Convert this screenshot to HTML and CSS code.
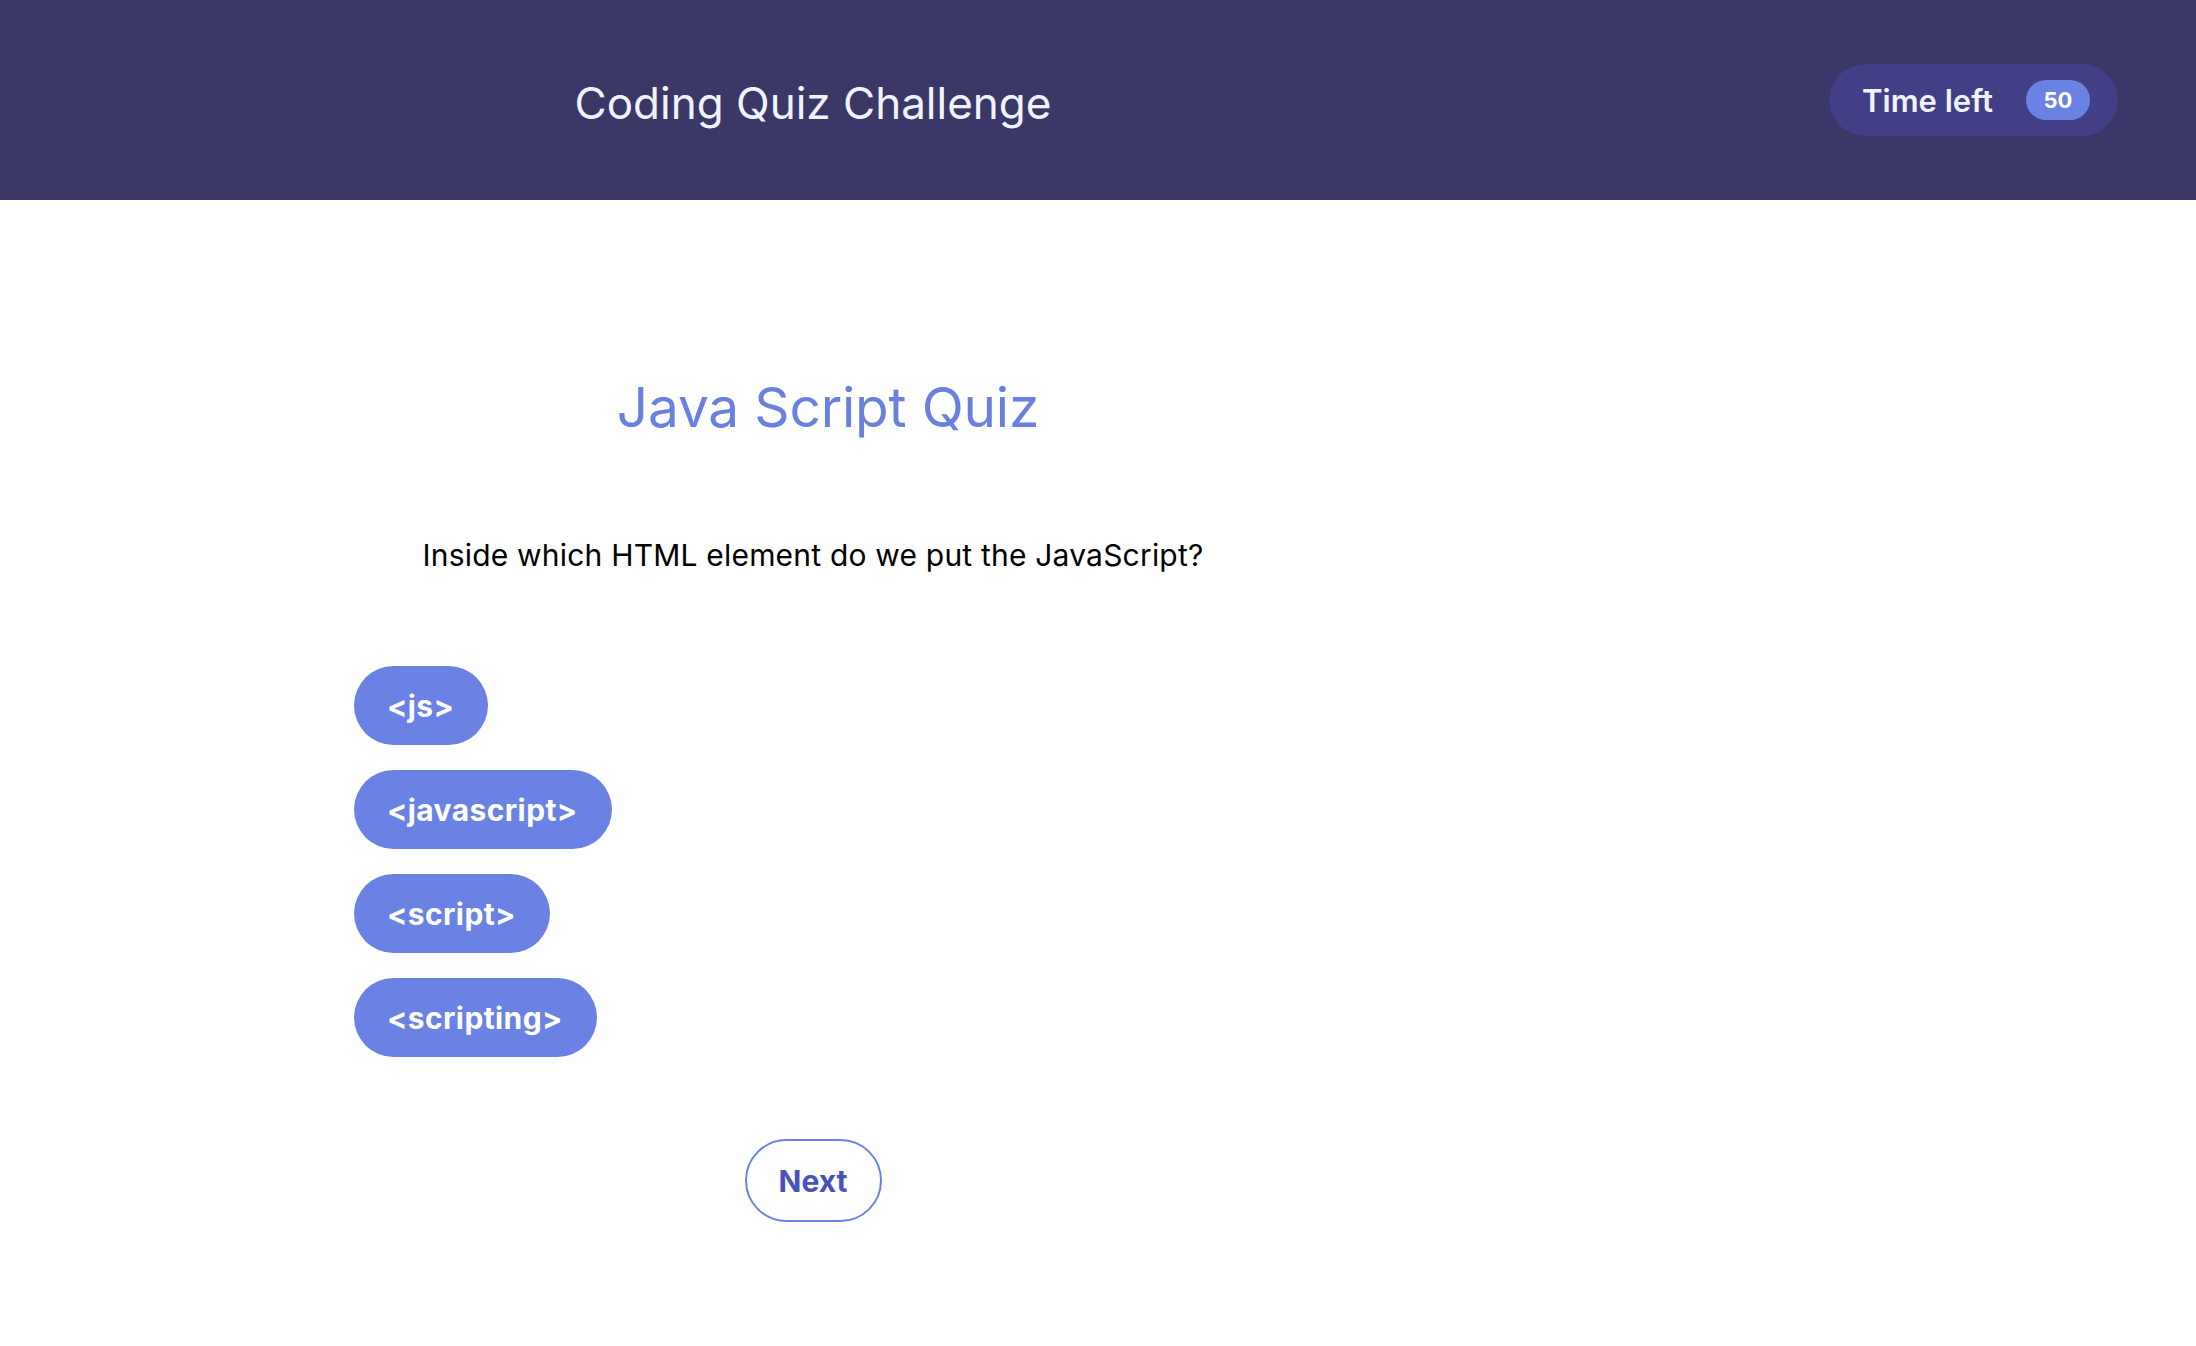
FILE: index.html
```html
<!DOCTYPE html>
<html lang="en">
<head>
<meta charset="utf-8">
<title>Coding Quiz Challenge</title>
<link rel="stylesheet" href="styles.css">
</head>
<body>
<header class="topbar">
  <div class="brand">Coding Quiz Challenge</div>
  <div class="timer">
    <span class="timer-label">Time left</span>
    <span class="timer-badge">50</span>
  </div>
</header>
<main class="quiz">
  <h1 class="quiz-title">Java Script Quiz</h1>
  <p class="question">Inside which HTML element do we put the JavaScript?</p>
  <div class="answers">
    <button class="answer">&lt;js&gt;</button>
    <button class="answer">&lt;javascript&gt;</button>
    <button class="answer">&lt;script&gt;</button>
    <button class="answer">&lt;scripting&gt;</button>
  </div>
  <button class="next">Next</button>
</main>
</body>
</html>
```

FILE: styles.css
```css
* { box-sizing: border-box; }
html, body { margin: 0; padding: 0; }
body {
  font-family: Inter, "Noto Sans", "Liberation Sans", sans-serif;
  background: #ffffff;
  color: #000000;
}
.topbar {
  height: 200px;
  background: #3b3767;
  display: flex;
  align-items: center;
}
.brand {
  width: 1626px;
  padding-top: 5px;
  text-align: center;
  color: #eef3ff;
  font-size: 44px;
  line-height: 1;
  font-weight: 400;
}
.timer {
  margin-left: auto;
  margin-right: 78px;
  height: 72px;
  border-radius: 36px;
  background: #423f87;
  display: flex;
  align-items: center;
  padding: 0 28px 0 33px;
  gap: 33px;
}
.timer-label {
  color: #eef3ff;
  font-size: 31px;
  font-weight: 600;
  line-height: 1;
}
.timer-badge {
  width: 64px;
  height: 40px;
  border-radius: 20px;
  background: #6a82e3;
  color: #ffffff;
  font-size: 22px;
  font-weight: 700;
  display: flex;
  align-items: center;
  justify-content: center;
}
.quiz {
  width: 1626px;
  display: flex;
  flex-direction: column;
  align-items: center;
}
.quiz-title {
  margin: 173px 0 0;
  padding-left: 30px;
  font-size: 55px;
  line-height: 68px;
  font-weight: 400;
  letter-spacing: -0.2px;
  color: #6a80e0;
}
.question {
  margin: 97px 0 0;
  font-size: 30px;
  line-height: 34px;
  letter-spacing: 0.2px;
  color: #000;
}
.answers {
  align-self: flex-start;
  margin: 94px 0 0 354px;
  display: flex;
  flex-direction: column;
  align-items: flex-start;
  gap: 25px;
}
.answer {
  height: 79px;
  border: none;
  border-radius: 40px;
  background: #6a82e3;
  color: #ffffff;
  font-family: inherit;
  font-size: 30px;
  font-weight: 700;
  letter-spacing: 0.4px;
  padding: 0 34px 0 33px;
  cursor: pointer;
}
.next {
  margin-top: 82px;
  width: 137px;
  height: 83px;
  border: 2px solid #6a82e3;
  border-radius: 42px;
  background: #ffffff;
  color: #4a52b8;
  font-family: inherit;
  font-size: 30px;
  font-weight: 700;
  cursor: pointer;
}
```
